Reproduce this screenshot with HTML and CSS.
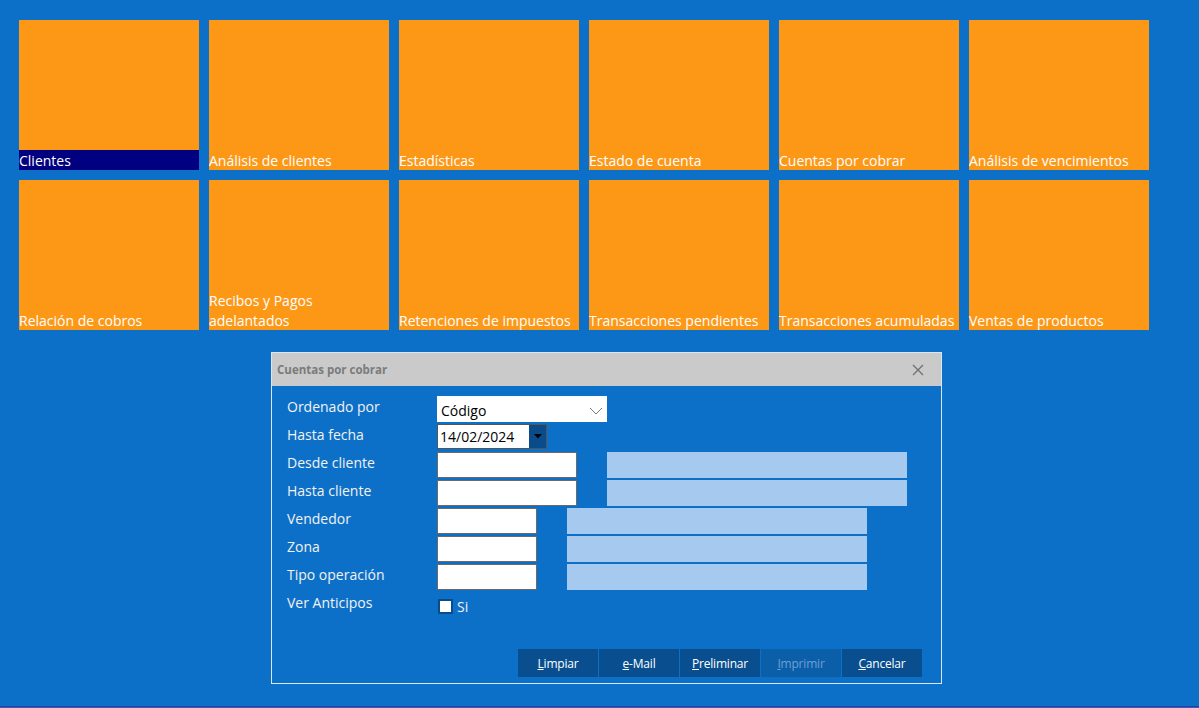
FILE: index.html
```html
<!DOCTYPE html>
<html lang="es">
<head>
<meta charset="utf-8">
<title>Cuentas por cobrar</title>
<link rel="stylesheet" href="styles.css">
</head>
<body>
<div class="page">
  <div class="tiles">
    <div class="tile"><span class="tile-label selected">Clientes</span></div>
    <div class="tile"><span class="tile-label">Análisis de clientes</span></div>
    <div class="tile"><span class="tile-label">Estadísticas</span></div>
    <div class="tile"><span class="tile-label">Estado de cuenta</span></div>
    <div class="tile"><span class="tile-label">Cuentas por cobrar</span></div>
    <div class="tile"><span class="tile-label">Análisis de vencimientos</span></div>
    <div class="tile"><span class="tile-label">Relación de cobros</span></div>
    <div class="tile"><span class="tile-label">Recibos y Pagos<br>adelantados</span></div>
    <div class="tile"><span class="tile-label">Retenciones de impuestos</span></div>
    <div class="tile"><span class="tile-label">Transacciones pendientes</span></div>
    <div class="tile"><span class="tile-label">Transacciones acumuladas</span></div>
    <div class="tile"><span class="tile-label">Ventas de productos</span></div>
  </div>

  <div class="dialog">
    <div class="titlebar">
      <span class="title">Cuentas por cobrar</span>
      <svg class="close" width="12" height="12" viewBox="0 0 12 12"><path d="M1 1 L11 11 M11 1 L1 11" stroke="#6e6e6e" stroke-width="1.2" fill="none"/></svg>
    </div>
    <div class="form">
      <div class="row">
        <span class="label">Ordenado por</span>
        <div class="select"><span>Código</span>
          <svg width="14" height="8" viewBox="0 0 14 8"><path d="M1 1 L7 7 L13 1" stroke="#7a7a7a" stroke-width="1" fill="none"/></svg>
        </div>
      </div>
      <div class="row">
        <span class="label">Hasta fecha</span>
        <div class="date"><span>14/02/2024</span><span class="date-btn"><svg width="8" height="5" viewBox="0 0 8 5"><path d="M0 0 H8 L4 4.5 Z" fill="#000"/></svg></span></div>
      </div>
      <div class="row">
        <span class="label">Desde cliente</span>
        <div class="input wide"></div>
        <div class="info long"></div>
      </div>
      <div class="row">
        <span class="label">Hasta cliente</span>
        <div class="input wide"></div>
        <div class="info long"></div>
      </div>
      <div class="row">
        <span class="label">Vendedor</span>
        <div class="input"></div>
        <div class="info"></div>
      </div>
      <div class="row">
        <span class="label">Zona</span>
        <div class="input"></div>
        <div class="info"></div>
      </div>
      <div class="row">
        <span class="label">Tipo operación</span>
        <div class="input"></div>
        <div class="info"></div>
      </div>
      <div class="row">
        <span class="label">Ver Anticipos</span>
        <label class="check"><span class="box"></span><span>Si</span></label>
      </div>
    </div>
    <div class="buttons">
      <button class="btn"><u>L</u>impiar</button>
      <button class="btn"><u>e</u>-Mail</button>
      <button class="btn"><u>P</u>reliminar</button>
      <button class="btn disabled"><u>I</u>mprimir</button>
      <button class="btn"><u>C</u>ancelar</button>
    </div>
  </div>
</div>
</body>
</html>
```

FILE: styles.css
```css
html, body {
  margin: 0;
  padding: 0;
}
body {
  background: #0d70c8;
  font-family: "Open Sans", "Noto Sans", sans-serif;
  color: #fff;
}
.page {
  height: 707px;
  border-bottom: 1px solid #5b2a8e;
  padding: 20px 0 0 19px;
  box-sizing: border-box;
  display: flex;
  flex-direction: column;
  align-items: flex-start;
}
.tiles {
  display: grid;
  grid-template-columns: repeat(6, 180px);
  grid-auto-rows: 150px;
  gap: 10px;
}
.tile {
  background: #fd9817;
  display: flex;
  flex-direction: column;
  justify-content: flex-end;
}
.tile-label {
  display: block;
  font-size: 14px;
  line-height: 20px;
  padding-top: 1px;
  margin-bottom: -1px;
  color: #fff;
  white-space: nowrap;
}
.tile-label.selected {
  background: #000080;
  padding-top: 2px;
  line-height: 18px;
  margin-bottom: 0;
}
.dialog {
  margin: 22px 0 0 252px;
  width: 671px;
  height: 332px;
  box-sizing: border-box;
  border: 1px solid #d9e6f4;
  display: flex;
  flex-direction: column;
}
.titlebar {
  height: 33px;
  background: #cacaca;
  display: flex;
  align-items: center;
  justify-content: space-between;
  padding: 0 17px 0 5px;
}
.title {
  font-size: 11.5px;
  font-weight: bold;
  color: #7b7b7b;
}
.form {
  padding: 10px 0 0 15px;
  display: flex;
  flex-direction: column;
  gap: 2px;
}
.row {
  display: flex;
  align-items: flex-start;
  height: 26px;
}
.label {
  width: 150px;
  font-size: 14px;
  line-height: 22px;
  color: #f2f2f2;
}
.select {
  width: 170px;
  height: 26px;
  background: #fff;
  display: flex;
  align-items: center;
  justify-content: space-between;
  padding: 3px 4px 0 4px;
  box-sizing: border-box;
  color: #000;
  font-size: 14px;
}
.date {
  width: 110px;
  height: 25px;
  box-sizing: border-box;
  border: 1px solid #555;
  background: #fff;
  color: #000;
  font-size: 14px;
  display: flex;
  align-items: center;
  justify-content: space-between;
  padding-left: 2px;
}
.date-btn {
  width: 17px;
  height: 23px;
  background: #0a4c8a;
  display: flex;
  align-items: center;
  justify-content: center;
}
.input {
  width: 100px;
  height: 26px;
  box-sizing: border-box;
  border: 1px solid #6a6a6a;
  background: #fff;
}
.input.wide {
  width: 140px;
}
.info {
  width: 300px;
  height: 26px;
  margin-left: 30px;
  background: #a6c9ef;
}
.check {
  display: flex;
  align-items: center;
  gap: 4px;
  margin-top: 5px;
  font-size: 14px;
  color: #f2f2f2;
}
.box {
  width: 15px;
  height: 15px;
  box-sizing: border-box;
  border: 2px solid #0a4c8a;
  background: #fff;
  margin-left: 1px;
}
.buttons {
  margin-top: auto;
  display: flex;
  justify-content: flex-end;
  gap: 1px;
  padding: 0 19px 6px 0;
}
.btn {
  width: 80px;
  height: 28px;
  border: none;
  background: #094f8f;
  color: #fff;
  font-family: "Open Sans", "Noto Sans", sans-serif;
  font-size: 12px;
  padding: 0;
  letter-spacing: -0.2px;
}
.btn.disabled {
  background: #0b5fa9;
  color: #6d9fd3;
}
```
